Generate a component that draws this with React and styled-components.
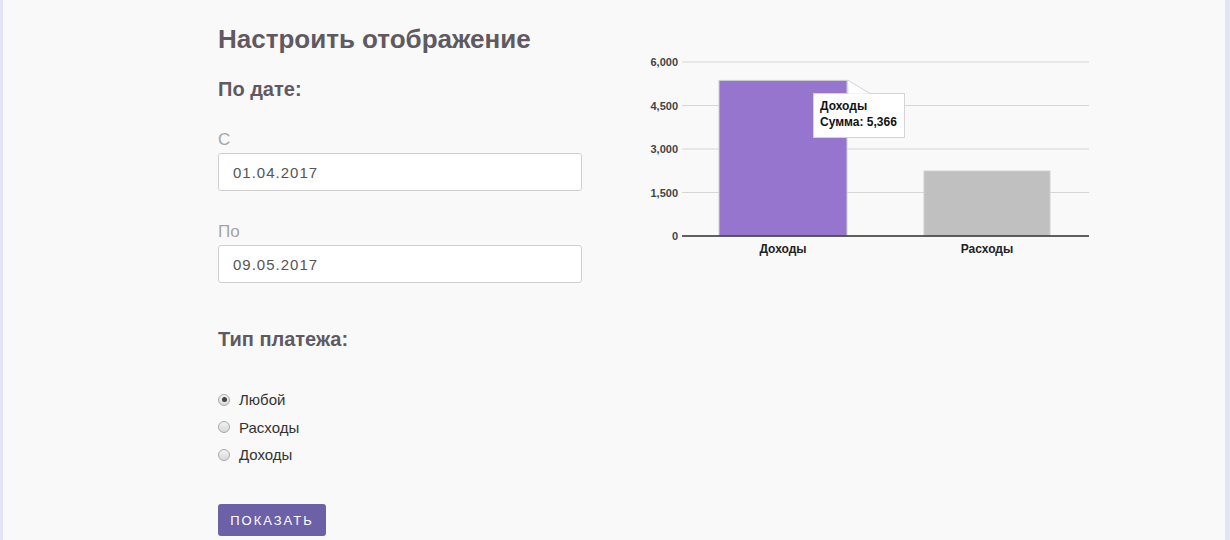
import React from 'react'
import styled, { createGlobalStyle } from 'styled-components'

const Global = createGlobalStyle`
  html, body { margin: 0; padding: 0; }
  body {
    background: #f9f9f9;
    font-family: "Liberation Sans", Arial, sans-serif;
  }
`

const Page = styled.div`
  width: 1230px;
  height: 540px;
  box-sizing: border-box;
  border-left: 3px solid #e3e3f6;
  border-right: 5px solid #e3e3f6;
  background: #f9f9f9;
  display: flex;
  padding-left: 215px;
  overflow: hidden;
`

const Form = styled.div`
  width: 364px;
  display: flex;
  flex-direction: column;
  padding-top: 24px;
`

const Title = styled.h1`
  margin: 0;
  font-size: 26px;
  font-weight: bold;
  color: #5f5a62;
  line-height: 30px;
`

const Subtitle = styled.h2`
  margin: ${p => p.$top}px 0 0;
  font-size: 20px;
  font-weight: bold;
  color: #5f5a62;
  line-height: 24px;
`

const Label = styled.label`
  margin-top: ${p => p.$top}px;
  font-size: 17px;
  color: #a5a5a5;
  line-height: 20px;
`

const Input = styled.input`
  margin-top: 3px;
  height: 38px;
  box-sizing: border-box;
  border: 1px solid #cfcfcf;
  border-radius: 3px;
  background: #fff;
  padding: 0 14px;
  font-family: "Liberation Sans", Arial, sans-serif;
  font-size: 15px;
  letter-spacing: 1px;
  color: #555;
  outline: none;
`

const Radios = styled.div`
  margin-top: 39px;
  display: flex;
  flex-direction: column;
  gap: 8.5px;
`

const RadioRow = styled.label`
  display: flex;
  align-items: center;
  gap: 9px;
  font-size: 15px;
  color: #333;
  line-height: 19px;
`

const Dot = styled.span`
  width: 12px;
  height: 12px;
  box-sizing: border-box;
  border-radius: 50%;
  border: 1px solid #a9a9a9;
  background: linear-gradient(#f2f2f2, #d9d9d9);
  display: flex;
  align-items: center;
  justify-content: center;
  &::after {
    content: '';
    width: 5px;
    height: 5px;
    border-radius: 50%;
    background: ${p => (p.$checked ? '#444' : 'transparent')};
  }
`

const Button = styled.button`
  margin-top: 40px;
  align-self: flex-start;
  width: 108px;
  height: 32px;
  border: none;
  border-radius: 3px;
  background: #6c60a6;
  color: #fff;
  font-family: "Liberation Sans", Arial, sans-serif;
  font-size: 13px;
  letter-spacing: 2px;
  cursor: pointer;
`

const ChartWrap = styled.div`
  margin-left: 38px;
  padding-top: 40px;
`

const ticks = [6000, 4500, 3000, 1500, 0]
const base = 196
const scale = 174 / 6000
const fmt = n => n.toLocaleString('en-US')

function Chart() {
  const bars = [
    { name: 'Доходы', value: 5366, x: 99, w: 128, fill: '#9575cd' },
    { name: 'Расходы', value: 2241, x: 304, w: 126, fill: '#c0c0c0' },
  ]
  return (
    <svg width="480" height="230" fontFamily="Liberation Sans, Arial, sans-serif">
      {ticks.map(t => (
        <g key={t}>
          <line x1="62" x2="469" y1={base - t * scale} y2={base - t * scale} stroke="#d6d6d6" strokeWidth="1" />
          <text x="58" y={base - t * scale + 4} textAnchor="end" fontSize="11" fontWeight="bold" fill="#444">{fmt(t)}</text>
        </g>
      ))}
      {bars.map(b => (
        <g key={b.name}>
          <rect x={b.x} y={base - b.value * scale} width={b.w} height={b.value * scale} fill={b.fill} stroke="#d0d0d0" strokeWidth="1" />
          <text x={b.x + b.w / 2} y="213" textAnchor="middle" fontSize="12" fontWeight="bold" fill="#222">{b.name}</text>
        </g>
      ))}
      <line x1="62" x2="469" y1={base} y2={base} stroke="#333" strokeWidth="1.5" />
      <g>
        <rect x="193.5" y="53.5" width="91" height="44" fill="#fff" stroke="#d4d4d4" />
        <path d="M228 53.8 L227.5 40 L250 53.8 Z" fill="#fff" />
        <path d="M228 53.5 L227.5 40 L250 53.5" fill="none" stroke="#d4d4d4" />
        <text x="200" y="70" fontSize="12" fontWeight="bold" fill="#111">Доходы</text>
        <text x="200" y="86" fontSize="12" fontWeight="bold" fill="#111">Сумма: 5,366</text>
      </g>
    </svg>
  )
}

export default function App() {
  return (
    <Page>
      <Global />
      <Form>
        <Title>Настроить отображение</Title>
        <Subtitle $top={23}>По дате:</Subtitle>
        <Label $top={29}>С</Label>
        <Input defaultValue="01.04.2017" />
        <Label $top={31}>По</Label>
        <Input defaultValue="09.05.2017" />
        <Subtitle $top={44}>Тип платежа:</Subtitle>
        <Radios>
          <RadioRow><Dot $checked />Любой</RadioRow>
          <RadioRow><Dot />Расходы</RadioRow>
          <RadioRow><Dot />Доходы</RadioRow>
        </Radios>
        <Button>ПОКАЗАТЬ</Button>
      </Form>
      <ChartWrap>
        <Chart />
      </ChartWrap>
    </Page>
  )
}
